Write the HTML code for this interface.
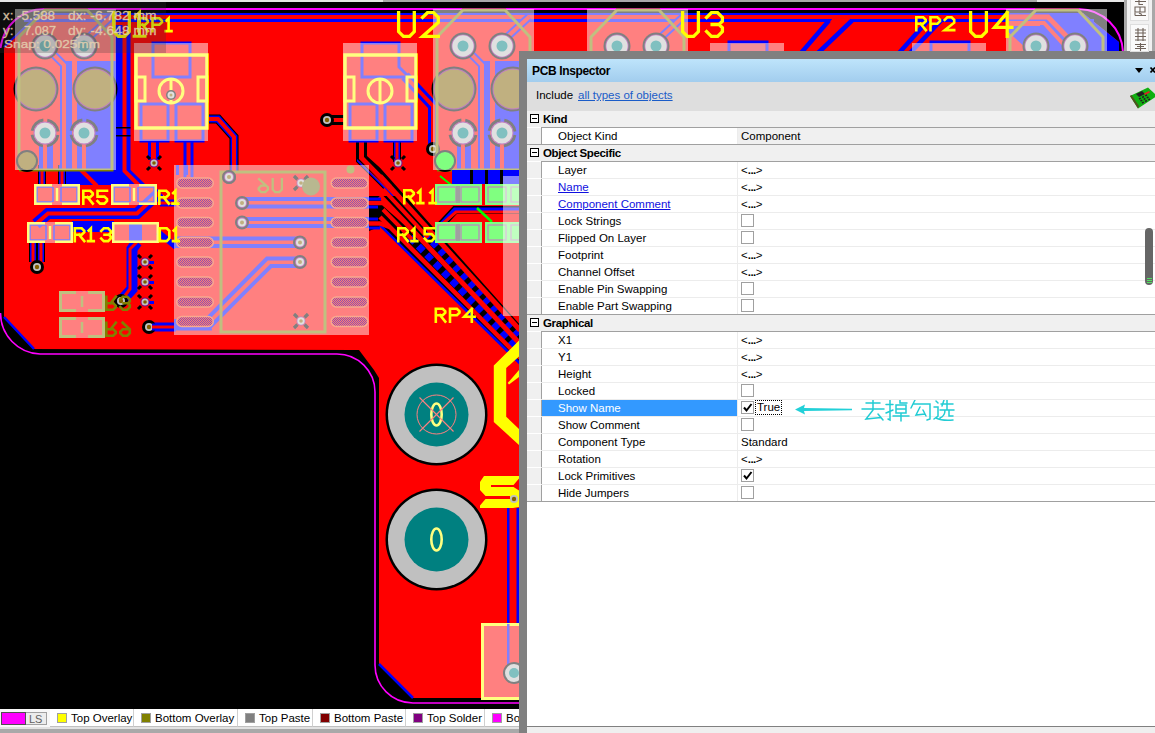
<!DOCTYPE html>
<html><head><meta charset="utf-8">
<style>
*{margin:0;padding:0;box-sizing:border-box}
html,body{width:1155px;height:733px;overflow:hidden;background:#000;font-family:"Liberation Sans",sans-serif}
#pcb{position:absolute;left:0;top:0}
#panel{position:absolute;left:519px;top:51px;width:636px;height:682px;background:#808080}
#pin{position:absolute;left:8px;top:8px;right:0;bottom:0;background:#fff}
#title{position:absolute;left:0;top:0;right:0;height:23px;background:linear-gradient(#bee4fb,#a2cdee);}
#title b{position:absolute;left:5px;top:5px;font-size:12px;letter-spacing:-0.35px;color:#000}
#incl{position:absolute;left:0;top:23px;right:0;height:29px;background:#dedede;font-size:11.5px}
#incl span{position:absolute;left:9px;top:7px}
#incl a{position:absolute;left:51px;top:7px;color:#1a5cc8;text-decoration:underline}
.tbl{position:absolute;left:0;top:0}
.hdr{position:absolute;left:527px;width:628px;height:16px;background:#f0f0f0;font-size:11.5px}
.hdr b{position:absolute;left:16px;top:2px;letter-spacing:-0.35px}
.mi{position:absolute;left:3px;top:3px;width:9px;height:9px;border:1px solid #000;background:#fff}
.mi:after{content:"";position:absolute;left:1px;top:3px;width:5px;height:1px;background:#000}
.row{position:absolute;left:527px;width:628px;height:16px;font-size:11.5px;background:#f0f0f0}
.nm{position:absolute;left:14px;top:0;width:196px;height:16px;background:#fff;border-left:1px solid #a0a0a0}
.nm span{position:absolute;left:16px;top:2px;color:#000;white-space:nowrap}
.nm.lk span{color:#1010e0;text-decoration:underline}
.nm.sel{background:#3399ff}
.nm.sel span{color:#fff}
.vl{position:absolute;left:210px;top:0;right:0;height:16px;background:#fff;border-left:1px solid #ececec;padding-left:3px;padding-top:2px;white-space:nowrap}
.vl.ro{background:#f0f0f0}
.dots{font-weight:700;letter-spacing:-0.5px}
.cb{position:absolute;left:3px;top:1px;width:13px;height:13px;border:1px solid #a0a0a0;background:#fff}
.cb svg{position:absolute;left:0;top:0}
.tru{position:absolute;left:17px;top:0px;border:1px dotted #000;padding:0 1px;line-height:13px}
.ln{position:absolute;height:1px}

#bbar{position:absolute;left:0;top:709px;width:519px;height:19px;background:#f7f7f7;font-size:11.5px;color:#000}
#bbar2{position:absolute;left:0;top:727px;width:519px;height:6px;background:#a9a9a9}
#bbar2:after{content:"";position:absolute;left:0;top:0;width:519px;height:2px;background:#e2e2e2}
.lsw{position:absolute;left:1px;top:3px;width:25px;height:13px;background:#ff00ff;border:1px solid #505050}
.lsb{position:absolute;left:26px;top:3px;width:21px;height:13px;background:#ececec;border:1px solid #a0a0a0;border-left:none;color:#606060;font-size:11px;line-height:12px;padding-left:3px}
.tab{position:absolute;top:0;height:18px;background:#fff;border-right:1px solid #d0d0d0;border-bottom:1px solid #c0c0c0}
.tab i{position:absolute;left:7px;top:4px;width:10px;height:10px;border:1px solid #a0a0a0}
.tab span{position:absolute;left:21px;top:3px;white-space:nowrap}
#side{position:absolute;left:1124px;top:0;width:31px;height:51px;background:#d4d4d4}
.stab{position:absolute;left:6px;width:19px;background:#f8f8f8;border:1px solid #dcdcdc}
.ptools{position:absolute;font-size:11px;color:#000}
</style></head><body>
<svg id="pcb" width="1155" height="733" viewBox="0 0 1155 733" font-family="Liberation Sans, sans-serif">
<defs>
<pattern id="chk" width="2" height="2" patternUnits="userSpaceOnUse"><rect width="2" height="2" fill="#ff8070"/><rect width="1" height="1" fill="#9050b0"/><rect x="1" y="1" width="1" height="1" fill="#9050b0"/></pattern>
<pattern id="chk2" width="4" height="4" patternUnits="userSpaceOnUse"><rect width="4" height="4" fill="#ff0000"/><rect width="2" height="2" fill="#400080"/><rect x="2" y="2" width="2" height="2" fill="#400080"/></pattern>
</defs>
<rect x="0" y="0" width="1155" height="2" fill="#e6e6e6"/>
<rect x="383" y="0" width="654" height="2" fill="#a8a8a8"/>
<path d="M0.5,48 A44,44 0 0 1 44,9 L1079,9 A45,45 0 0 1 1123,52" fill="none" stroke="#ff00ff" stroke-width="2"/>
<path d="M0.5,313 A41,41 0 0 0 40,354 L337,354 A38,38 0 0 1 375,392 L375,665 A38,38 0 0 0 413,703 L519,703" fill="none" stroke="#ff00ff" stroke-width="1.6"/>
<path d="M4,47 L40,13 L1083,13 L1119,42 L1119,60 L519,60 L519,698 L413,698 L379,664 L379,378 L374,370 L359,350 L34,349 L4,317 Z" fill="#ff0000"/>
<line x1="4" y1="317" x2="34" y2="349" stroke="#0000ff" stroke-width="2.5" stroke-linecap="butt"/>
<line x1="4" y1="47" x2="40" y2="13" stroke="#0000ff" stroke-width="2" stroke-linecap="butt"/>
<line x1="379" y1="664" x2="413" y2="698" stroke="#0000ff" stroke-width="2.5" stroke-linecap="butt"/>
<rect x="40" y="13" width="1040" height="2" fill="#0000ff" />
<rect x="24" y="19" width="1070" height="3" fill="#0000ff" />
<rect x="115.5" y="25" width="15" height="146" fill="#0000ff" />
<path d="M58,170 L130.5,170 L146,185 L58,185 Z" fill="#0000ff"/>
<polyline points="124.5,25 124.5,171 139,185.5" fill="none" stroke="#ff0000" stroke-width="4" stroke-linecap="butt" stroke-linejoin="miter"/>
<polyline points="81,170 97,186" fill="none" stroke="#ff0000" stroke-width="4" stroke-linecap="butt" stroke-linejoin="miter"/>
<rect x="96" y="127" width="34.5" height="1.5" fill="#000000" />
<rect x="96" y="135" width="34.5" height="1.5" fill="#000000" />
<polyline points="42,165 42,185" fill="none" stroke="#000000" stroke-width="8.0" stroke-linecap="butt" stroke-linejoin="miter"/>
<polyline points="42,165 42,185" fill="none" stroke="#0000ff" stroke-width="6.0" stroke-linecap="butt" stroke-linejoin="miter"/>
<polyline points="42,165 42,185" fill="none" stroke="#ff0000" stroke-width="3" stroke-linecap="butt" stroke-linejoin="miter"/>
<polyline points="62,165 62,185" fill="none" stroke="#000000" stroke-width="8.0" stroke-linecap="butt" stroke-linejoin="miter"/>
<polyline points="62,165 62,185" fill="none" stroke="#0000ff" stroke-width="6.0" stroke-linecap="butt" stroke-linejoin="miter"/>
<polyline points="62,165 62,185" fill="none" stroke="#ff0000" stroke-width="3" stroke-linecap="butt" stroke-linejoin="miter"/>
<polyline points="36,224 48,213.5 137,213.5 160,192" fill="none" stroke="#0000ff" stroke-width="11" stroke-linecap="butt" stroke-linejoin="miter"/>
<polyline points="36,224 48,213.5 137,213.5 160,192" fill="none" stroke="#ff0000" stroke-width="4" stroke-linecap="butt" stroke-linejoin="miter"/>
<rect x="72" y="221" width="42" height="11" fill="#0000ff" />
<polyline points="33,242 33,262" fill="none" stroke="#000000" stroke-width="8.0" stroke-linecap="butt" stroke-linejoin="miter"/>
<polyline points="33,242 33,262" fill="none" stroke="#0000ff" stroke-width="6.0" stroke-linecap="butt" stroke-linejoin="miter"/>
<polyline points="33,242 33,262" fill="none" stroke="#ff0000" stroke-width="3" stroke-linecap="butt" stroke-linejoin="miter"/>
<polyline points="41,242 41,262" fill="none" stroke="#000000" stroke-width="8.0" stroke-linecap="butt" stroke-linejoin="miter"/>
<polyline points="41,242 41,262" fill="none" stroke="#0000ff" stroke-width="6.0" stroke-linecap="butt" stroke-linejoin="miter"/>
<polyline points="41,242 41,262" fill="none" stroke="#ff0000" stroke-width="3" stroke-linecap="butt" stroke-linejoin="miter"/>
<polyline points="153.5,141 153.5,160" fill="none" stroke="#0000ff" stroke-width="11" stroke-linecap="butt" stroke-linejoin="miter"/>
<polyline points="153.5,141 153.5,160" fill="none" stroke="#ff0000" stroke-width="5" stroke-linecap="butt" stroke-linejoin="miter"/>
<polyline points="188.5,141 188.5,178" fill="none" stroke="#0000ff" stroke-width="10" stroke-linecap="butt" stroke-linejoin="miter"/>
<polyline points="188.5,141 188.5,178" fill="none" stroke="#ff0000" stroke-width="4" stroke-linecap="butt" stroke-linejoin="miter"/>
<polyline points="209,119 218,119 234,137 234,172" fill="none" stroke="#000000" stroke-width="9.0" stroke-linecap="butt" stroke-linejoin="miter"/>
<polyline points="209,119 218,119 234,137 234,172" fill="none" stroke="#0000ff" stroke-width="7.0" stroke-linecap="butt" stroke-linejoin="miter"/>
<polyline points="209,119 218,119 234,137 234,172" fill="none" stroke="#ff0000" stroke-width="4" stroke-linecap="butt" stroke-linejoin="miter"/>
<polyline points="327,120 345,120" fill="none" stroke="#000000" stroke-width="10" stroke-linecap="butt" stroke-linejoin="miter"/>
<polyline points="327,120 345,120" fill="none" stroke="#ff0000" stroke-width="4" stroke-linecap="butt" stroke-linejoin="miter"/>
<polyline points="360,141 360,160 375,175 400,200" fill="none" stroke="#000000" stroke-width="8.0" stroke-linecap="butt" stroke-linejoin="miter"/>
<polyline points="360,141 360,160 375,175 400,200" fill="none" stroke="#0000ff" stroke-width="6.0" stroke-linecap="butt" stroke-linejoin="miter"/>
<polyline points="360,141 360,160 375,175 400,200" fill="none" stroke="#ff0000" stroke-width="3" stroke-linecap="butt" stroke-linejoin="miter"/>
<polyline points="397,141 397,162" fill="none" stroke="#000000" stroke-width="8.0" stroke-linecap="butt" stroke-linejoin="miter"/>
<polyline points="397,141 397,162" fill="none" stroke="#0000ff" stroke-width="6.0" stroke-linecap="butt" stroke-linejoin="miter"/>
<polyline points="397,141 397,162" fill="none" stroke="#ff0000" stroke-width="3" stroke-linecap="butt" stroke-linejoin="miter"/>
<polyline points="405,76 433,106 433,150" fill="none" stroke="#0000ff" stroke-width="10" stroke-linecap="butt" stroke-linejoin="miter"/>
<polyline points="405,76 433,106 433,150" fill="none" stroke="#ff0000" stroke-width="4" stroke-linecap="butt" stroke-linejoin="miter"/>
<polyline points="137,242 132,249 132,289 121,301" fill="none" stroke="#0000ff" stroke-width="11" stroke-linecap="butt" stroke-linejoin="miter"/>
<polyline points="137,242 130,249 130,289 121,301" fill="none" stroke="#ff0000" stroke-width="3" stroke-linecap="butt" stroke-linejoin="miter"/>
<polyline points="158,232 176,247" fill="none" stroke="#0000ff" stroke-width="6" stroke-linecap="butt" stroke-linejoin="miter"/>
<polyline points="149,327 176,327" fill="none" stroke="#0000ff" stroke-width="9" stroke-linecap="butt" stroke-linejoin="miter"/>
<polyline points="149,327 176,327" fill="none" stroke="#ff0000" stroke-width="3" stroke-linecap="butt" stroke-linejoin="miter"/>
<rect x="145" y="261" width="9" height="3" fill="#0000ff" />
<rect x="145" y="281" width="9" height="3" fill="#0000ff" />
<rect x="145" y="301" width="9" height="3" fill="#0000ff" />
<polyline points="160,203 176,203" fill="none" stroke="#0000ff" stroke-width="7" stroke-linecap="butt" stroke-linejoin="miter"/>
<polyline points="160,203 176,203" fill="none" stroke="#ff0000" stroke-width="3" stroke-linecap="butt" stroke-linejoin="miter"/>
<path d="M356,140 L367,140 L367,156 L380,167.7 L520,324.7 L520,364.3 L380,226.4 L369,231 L369,196 L396,196 L357,159 Z" fill="#000000"/>
<line x1="425.0" y1="233.9" x2="520.0" y2="336.6" stroke="#0000ff" stroke-width="7" stroke-dasharray="6 5"/>
<line x1="410.0" y1="237.4" x2="520.0" y2="350.8" stroke="#0000ff" stroke-width="7" stroke-dasharray="7 5"/>
<line x1="380.0" y1="225.2" x2="520.0" y2="363.5" stroke="#0000ff" stroke-width="2.5"/>
<line x1="380.0" y1="175.9" x2="520.0" y2="330.2" stroke="#ff0000" stroke-width="5"/>
<line x1="383.0" y1="189.1" x2="428.0" y2="237.7" stroke="#ff0000" stroke-width="4"/>
<line x1="383.0" y1="209.5" x2="412.0" y2="239.4" stroke="#ff0000" stroke-width="4"/>
<line x1="380.0" y1="195.9" x2="520.0" y2="343.7" stroke="#ff0000" stroke-width="5"/>
<line x1="380.0" y1="217.0" x2="520.0" y2="358.0" stroke="#ff0000" stroke-width="4.5"/>
<polyline points="361.5,140 361.5,158 390,186.9412857142857" fill="none" stroke="#ff0000" stroke-width="5" stroke-linecap="butt" stroke-linejoin="miter"/>
<polyline points="369,203 383,203 405,222.27457142857142" fill="none" stroke="#ff0000" stroke-width="4.5" stroke-linecap="butt" stroke-linejoin="miter"/>
<polyline points="369,199 381,199" fill="none" stroke="#0000ff" stroke-width="3" stroke-linecap="butt" stroke-linejoin="miter"/>
<polyline points="369,207 378,207" fill="none" stroke="#0000ff" stroke-width="3" stroke-linecap="butt" stroke-linejoin="miter"/>
<polyline points="369,223.5 380,223.5 390,227.07628571428572" fill="none" stroke="#ff0000" stroke-width="4.5" stroke-linecap="butt" stroke-linejoin="miter"/>
<polyline points="369,219 378,219" fill="none" stroke="#0000ff" stroke-width="3" stroke-linecap="butt" stroke-linejoin="miter"/>
<polyline points="369,228 380,228" fill="none" stroke="#0000ff" stroke-width="3" stroke-linecap="butt" stroke-linejoin="miter"/>
<g transform="translate(154,163)"><path d="M-7,-7 L-4,-4 M7,7 L4,4 M-7,7 L-4,4 M7,-7 L4,-4" stroke="#000000" stroke-width="3"/></g>
<circle cx="154" cy="163" r="4.5" fill="#800080" />
<circle cx="154" cy="163" r="3.5" fill="#c0c0c0" />
<circle cx="154" cy="163" r="1.8" fill="#806000" />
<g transform="translate(398,163)"><path d="M-7,-7 L-4,-4 M7,7 L4,4 M-7,7 L-4,4 M7,-7 L4,-4" stroke="#000000" stroke-width="3"/></g>
<circle cx="398" cy="163" r="4.5" fill="#800080" />
<circle cx="398" cy="163" r="3.5" fill="#c0c0c0" />
<circle cx="398" cy="163" r="1.8" fill="#806000" />
<circle cx="327" cy="120" r="7" fill="#000000" />
<circle cx="327" cy="120" r="4" fill="#c0c0c0" />
<circle cx="327" cy="120" r="2.2" fill="#806000" />
<circle cx="37" cy="267" r="7" fill="#000000" />
<circle cx="37" cy="267" r="4" fill="#c0c0c0" />
<circle cx="37" cy="267" r="2.2" fill="#806000" />
<circle cx="433" cy="149" r="7" fill="#000000" />
<circle cx="433" cy="149" r="4" fill="#c0c0c0" />
<circle cx="433" cy="149" r="2.2" fill="#806000" />
<g transform="translate(145,262)"><path d="M-7,-7 L-4,-4 M7,7 L4,4 M-7,7 L-4,4 M7,-7 L4,-4" stroke="#000000" stroke-width="3"/></g>
<circle cx="145" cy="262" r="4.5" fill="#800080" />
<circle cx="145" cy="262" r="3.5" fill="#c0c0c0" />
<circle cx="145" cy="262" r="1.8" fill="#806000" />
<g transform="translate(145,282)"><path d="M-7,-7 L-4,-4 M7,7 L4,4 M-7,7 L-4,4 M7,-7 L4,-4" stroke="#000000" stroke-width="3"/></g>
<circle cx="145" cy="282" r="4.5" fill="#800080" />
<circle cx="145" cy="282" r="3.5" fill="#c0c0c0" />
<circle cx="145" cy="282" r="1.8" fill="#806000" />
<g transform="translate(145,302)"><path d="M-7,-7 L-4,-4 M7,7 L4,4 M-7,7 L-4,4 M7,-7 L4,-4" stroke="#000000" stroke-width="3"/></g>
<circle cx="145" cy="302" r="4.5" fill="#800080" />
<circle cx="145" cy="302" r="3.5" fill="#c0c0c0" />
<circle cx="145" cy="302" r="1.8" fill="#806000" />
<circle cx="149" cy="327" r="7" fill="#000000" />
<circle cx="149" cy="327" r="4" fill="#c0c0c0" />
<circle cx="149" cy="327" r="2.2" fill="#806000" />
<circle cx="121" cy="301" r="7" fill="#000000" />
<circle cx="121" cy="301" r="4" fill="#c0c0c0" />
<circle cx="121" cy="301" r="2.2" fill="#806000" />
<circle cx="229" cy="177" r="7" fill="#000000" />
<circle cx="229" cy="177" r="4" fill="#c0c0c0" />
<circle cx="229" cy="177" r="2.2" fill="#806000" />
<path d="M1040,13 L1083,13 L1119,42 L1119,52 L1030,52 L1006,30 L1006,26 L1040,26 Z" fill="#0000ff"/>
<polyline points="1006,17 1048,17 1075,45" fill="none" stroke="#ff0000" stroke-width="5" stroke-linecap="butt" stroke-linejoin="miter"/>
<polyline points="1006,23 1044,23 1066,47" fill="none" stroke="#ff0000" stroke-width="4" stroke-linecap="butt" stroke-linejoin="miter"/>
<path d="M1006,30 L1030,52 L1006,52 Z" fill="#ff0000"/>
<path d="M61,61 L116,61 L116,170 L61,170 Z" fill="#0000ff"/>
<rect x="72" y="59" width="5" height="111" fill="#ff0000" />
<rect x="39" y="129" width="14" height="41" fill="#0000ff" />
<rect x="43" y="129" width="4" height="41" fill="#ff0000" />
<rect x="78" y="129" width="14" height="41" fill="#0000ff" />
<rect x="82" y="129" width="4" height="41" fill="#ff0000" />
<polyline points="47,48 64,65 64,170" fill="none" stroke="#0000ff" stroke-width="8" stroke-linecap="butt" stroke-linejoin="miter"/>
<polyline points="47,48 64,65 64,170" fill="none" stroke="#ff0000" stroke-width="4" stroke-linecap="butt" stroke-linejoin="miter"/>
<circle cx="36" cy="89" r="22.5" fill="#000000" />
<circle cx="36" cy="89" r="20.5" fill="#800080" />
<circle cx="36" cy="89" r="19.5" fill="#806000" />
<circle cx="95" cy="89" r="22.5" fill="#000000" />
<circle cx="95" cy="89" r="20.5" fill="#800080" />
<circle cx="95" cy="89" r="19.5" fill="#806000" />
<circle cx="45" cy="133" r="13" fill="none" stroke="#000000" stroke-width="3" stroke-dasharray="16.4 4" stroke-dashoffset="-2"/>
<circle cx="45" cy="133" r="11.5" fill="#800080" />
<circle cx="45" cy="133" r="10.5" fill="#c0c0c0" />
<circle cx="45" cy="133" r="5.5" fill="#008080" />
<circle cx="84" cy="133" r="13" fill="none" stroke="#000000" stroke-width="3" stroke-dasharray="16.4 4" stroke-dashoffset="-2"/>
<circle cx="84" cy="133" r="11.5" fill="#800080" />
<circle cx="84" cy="133" r="10.5" fill="#c0c0c0" />
<circle cx="84" cy="133" r="5.5" fill="#008080" />
<polyline points="87,39 111,17" fill="none" stroke="#0000ff" stroke-width="8" stroke-linecap="butt" stroke-linejoin="miter"/>
<polyline points="87,39 111,17" fill="none" stroke="#ff0000" stroke-width="4" stroke-linecap="butt" stroke-linejoin="miter"/>
<circle cx="45" cy="46" r="13.5" fill="#000000" />
<circle cx="45" cy="46" r="11.5" fill="#800080" />
<circle cx="45" cy="46" r="10.7" fill="#c0c0c0" />
<circle cx="45" cy="46" r="5.5" fill="#008080" />
<circle cx="84" cy="46" r="13.5" fill="#000000" />
<circle cx="84" cy="46" r="11.5" fill="#800080" />
<circle cx="84" cy="46" r="10.7" fill="#c0c0c0" />
<circle cx="84" cy="46" r="5.5" fill="#008080" />
<polyline points="19,170 19,37 45,10 87,10 112,37 112,170 19,170" fill="none" stroke="#808000" stroke-width="3" stroke-linecap="butt" stroke-linejoin="miter"/>
<circle cx="27" cy="161" r="11" fill="#000000" />
<circle cx="27" cy="161" r="9" fill="#806000" />
<rect x="15" y="9" width="101" height="161" fill="rgba(255,255,255,0.5)" />
<path d="M479,61 L534,61 L534,170 L479,170 Z" fill="#0000ff"/>
<rect x="490" y="59" width="5" height="111" fill="#ff0000" />
<rect x="457" y="129" width="14" height="41" fill="#0000ff" />
<rect x="461" y="129" width="4" height="41" fill="#ff0000" />
<rect x="496" y="129" width="14" height="41" fill="#0000ff" />
<rect x="500" y="129" width="4" height="41" fill="#ff0000" />
<polyline points="465,48 482,65 482,170" fill="none" stroke="#0000ff" stroke-width="8" stroke-linecap="butt" stroke-linejoin="miter"/>
<polyline points="465,48 482,65 482,170" fill="none" stroke="#ff0000" stroke-width="4" stroke-linecap="butt" stroke-linejoin="miter"/>
<circle cx="454" cy="89" r="22.5" fill="#000000" />
<circle cx="454" cy="89" r="20.5" fill="#800080" />
<circle cx="454" cy="89" r="19.5" fill="#806000" />
<circle cx="513" cy="89" r="22.5" fill="#000000" />
<circle cx="513" cy="89" r="20.5" fill="#800080" />
<circle cx="513" cy="89" r="19.5" fill="#806000" />
<circle cx="463" cy="133" r="13" fill="none" stroke="#000000" stroke-width="3" stroke-dasharray="16.4 4" stroke-dashoffset="-2"/>
<circle cx="463" cy="133" r="11.5" fill="#800080" />
<circle cx="463" cy="133" r="10.5" fill="#c0c0c0" />
<circle cx="463" cy="133" r="5.5" fill="#008080" />
<circle cx="502" cy="133" r="13" fill="none" stroke="#000000" stroke-width="3" stroke-dasharray="16.4 4" stroke-dashoffset="-2"/>
<circle cx="502" cy="133" r="11.5" fill="#800080" />
<circle cx="502" cy="133" r="10.5" fill="#c0c0c0" />
<circle cx="502" cy="133" r="5.5" fill="#008080" />
<polyline points="505,39 529,17" fill="none" stroke="#0000ff" stroke-width="8" stroke-linecap="butt" stroke-linejoin="miter"/>
<polyline points="505,39 529,17" fill="none" stroke="#ff0000" stroke-width="4" stroke-linecap="butt" stroke-linejoin="miter"/>
<circle cx="463" cy="46" r="13.5" fill="#000000" />
<circle cx="463" cy="46" r="11.5" fill="#800080" />
<circle cx="463" cy="46" r="10.7" fill="#c0c0c0" />
<circle cx="463" cy="46" r="5.5" fill="#008080" />
<circle cx="502" cy="46" r="13.5" fill="#000000" />
<circle cx="502" cy="46" r="11.5" fill="#800080" />
<circle cx="502" cy="46" r="10.7" fill="#c0c0c0" />
<circle cx="502" cy="46" r="5.5" fill="#008080" />
<polyline points="437,170 437,37 463,10 505,10 530,37 530,170 437,170" fill="none" stroke="#808000" stroke-width="3" stroke-linecap="butt" stroke-linejoin="miter"/>
<circle cx="445" cy="161" r="11" fill="#000000" />
<circle cx="445" cy="161" r="9" fill="#00ff00" />
<rect x="433" y="9" width="101" height="161" fill="rgba(255,255,255,0.5)" />
<polyline points="659,39 683,17" fill="none" stroke="#0000ff" stroke-width="8" stroke-linecap="butt" stroke-linejoin="miter"/>
<polyline points="659,39 683,17" fill="none" stroke="#ff0000" stroke-width="4" stroke-linecap="butt" stroke-linejoin="miter"/>
<circle cx="617" cy="46" r="13.5" fill="#000000" />
<circle cx="617" cy="46" r="11.5" fill="#800080" />
<circle cx="617" cy="46" r="10.7" fill="#c0c0c0" />
<circle cx="617" cy="46" r="5.5" fill="#008080" />
<circle cx="656" cy="46" r="13.5" fill="#000000" />
<circle cx="656" cy="46" r="11.5" fill="#800080" />
<circle cx="656" cy="46" r="10.7" fill="#c0c0c0" />
<circle cx="656" cy="46" r="5.5" fill="#008080" />
<polyline points="591,51 591,37 617,10 659,10 684,37 684,51" fill="none" stroke="#808000" stroke-width="3" stroke-linecap="butt" stroke-linejoin="miter"/>
<rect x="587" y="9" width="101" height="42" fill="rgba(255,255,255,0.5)" />
<circle cx="1036" cy="46" r="13.5" fill="#000000" />
<circle cx="1036" cy="46" r="11.5" fill="#800080" />
<circle cx="1036" cy="46" r="10.7" fill="#c0c0c0" />
<circle cx="1036" cy="46" r="5.5" fill="#008080" />
<circle cx="1075" cy="46" r="13.5" fill="#000000" />
<circle cx="1075" cy="46" r="11.5" fill="#800080" />
<circle cx="1075" cy="46" r="10.7" fill="#c0c0c0" />
<circle cx="1075" cy="46" r="5.5" fill="#008080" />
<polyline points="1010,51 1010,37 1036,10 1078,10 1103,37 1103,51" fill="none" stroke="#808000" stroke-width="3" stroke-linecap="butt" stroke-linejoin="miter"/>
<rect x="1006" y="9" width="101" height="42" fill="rgba(255,255,255,0.5)" />
<rect x="153" y="43" width="37" height="34" fill="none" stroke="#0000ff" stroke-width="3"/>
<rect x="141" y="104" width="27" height="37" fill="none" stroke="#0000ff" stroke-width="3"/>
<rect x="176" y="104" width="27" height="37" fill="none" stroke="#0000ff" stroke-width="3"/>
<rect x="136" y="55" width="71" height="73" fill="none" stroke="#ffff00" stroke-width="3.5"/>
<rect x="136" y="77" width="9" height="24" fill="none" stroke="#ffff00" stroke-width="3"/>
<rect x="198" y="77" width="9" height="24" fill="none" stroke="#ffff00" stroke-width="3"/>
<circle cx="171" cy="91" r="12" fill="none" stroke="#ffff00" stroke-width="3" />
<line x1="171" y1="78" x2="171" y2="104" stroke="#ffff00" stroke-width="3" stroke-linecap="butt"/>
<circle cx="171" cy="95" r="5" fill="#000000" />
<circle cx="171" cy="95" r="3.5" fill="#c0c0c0" />
<circle cx="171" cy="95" r="1.5" fill="#806000" />
<rect x="134" y="43" width="74" height="98" fill="rgba(255,255,255,0.5)" />
<path d="M362,43 L399,43 L399,67 L409,77 L362,77 Z" fill="none" stroke="#0000ff" stroke-width="3"/>
<rect x="350" y="104" width="27" height="37" fill="none" stroke="#0000ff" stroke-width="3"/>
<rect x="385" y="104" width="27" height="37" fill="none" stroke="#0000ff" stroke-width="3"/>
<rect x="345" y="55" width="71" height="73" fill="none" stroke="#ffff00" stroke-width="3.5"/>
<rect x="345" y="77" width="9" height="24" fill="none" stroke="#ffff00" stroke-width="3"/>
<rect x="407" y="77" width="9" height="24" fill="none" stroke="#ffff00" stroke-width="3"/>
<circle cx="380" cy="91" r="12" fill="none" stroke="#ffff00" stroke-width="3" />
<line x1="380" y1="78" x2="380" y2="104" stroke="#ffff00" stroke-width="3" stroke-linecap="butt"/>
<rect x="343" y="43" width="74" height="98" fill="rgba(255,255,255,0.5)" />
<rect x="37" y="187" width="16.0" height="15" fill="none" stroke="#0000ff" stroke-width="1.6"/>
<rect x="61.0" y="187" width="16.0" height="15" fill="none" stroke="#0000ff" stroke-width="1.6"/>
<rect x="35.25" y="185.25" width="43.5" height="18.5" fill="none" stroke="#ffff00" stroke-width="2.5"/>
<rect x="52.0" y="184" width="10" height="3" fill="#ff0000" />
<rect x="52.0" y="202" width="10" height="3" fill="#ff0000" />
<line x1="57.0" y1="188" x2="57.0" y2="201" stroke="#ffff00" stroke-width="2.5" stroke-linecap="butt"/>
<rect x="34" y="184" width="46" height="21" fill="rgba(255,255,255,0.5)" />
<rect x="114" y="187" width="16.0" height="15" fill="none" stroke="#0000ff" stroke-width="1.6"/>
<rect x="138.0" y="187" width="16.0" height="15" fill="none" stroke="#0000ff" stroke-width="1.6"/>
<rect x="112.25" y="185.25" width="43.5" height="18.5" fill="none" stroke="#ffff00" stroke-width="2.5"/>
<rect x="129.0" y="184" width="10" height="3" fill="#ff0000" />
<rect x="129.0" y="202" width="10" height="3" fill="#ff0000" />
<line x1="134.0" y1="188" x2="134.0" y2="201" stroke="#ffff00" stroke-width="2.5" stroke-linecap="butt"/>
<rect x="111" y="184" width="46" height="21" fill="rgba(255,255,255,0.5)" />
<rect x="30" y="225" width="16.0" height="15" fill="none" stroke="#0000ff" stroke-width="1.6"/>
<rect x="54.0" y="225" width="16.0" height="15" fill="none" stroke="#0000ff" stroke-width="1.6"/>
<rect x="28.25" y="223.25" width="43.5" height="18.5" fill="none" stroke="#ffff00" stroke-width="2.5"/>
<rect x="45.0" y="222" width="10" height="3" fill="#ff0000" />
<rect x="45.0" y="240" width="10" height="3" fill="#ff0000" />
<line x1="50.0" y1="226" x2="50.0" y2="239" stroke="#ffff00" stroke-width="2.5" stroke-linecap="butt"/>
<rect x="27" y="222" width="46" height="21" fill="rgba(255,255,255,0.5)" />
<rect x="129" y="223" width="13" height="19" fill="#0000ff" />
<rect x="113.25" y="223.25" width="44.5" height="18.5" fill="none" stroke="#ffff00" stroke-width="2.5"/>
<rect x="112" y="222" width="47" height="21" fill="rgba(255,255,255,0.5)" />
<rect x="60.5" y="292.5" width="43" height="18" fill="none" stroke="#808000" stroke-width="3"/>
<rect x="76" y="291" width="12" height="3" fill="#ff0000" />
<rect x="76" y="309" width="12" height="3" fill="#ff0000" />
<line x1="82" y1="296" x2="82" y2="307" stroke="#808000" stroke-width="2.5" stroke-linecap="butt"/>
<rect x="59" y="291" width="46" height="21" fill="rgba(255,255,255,0.5)" />
<rect x="60.5" y="318.5" width="43" height="18" fill="none" stroke="#808000" stroke-width="3"/>
<rect x="76" y="317" width="12" height="3" fill="#ff0000" />
<rect x="76" y="335" width="12" height="3" fill="#ff0000" />
<line x1="82" y1="322" x2="82" y2="333" stroke="#808000" stroke-width="2.5" stroke-linecap="butt"/>
<rect x="59" y="317" width="46" height="21" fill="rgba(255,255,255,0.5)" />
<polyline points="152,327 212,327" fill="none" stroke="#0000ff" stroke-width="7" stroke-linecap="butt" stroke-linejoin="miter"/>
<polyline points="152,327 212,327" fill="none" stroke="#ff0000" stroke-width="3" stroke-linecap="butt" stroke-linejoin="miter"/>
<polyline points="174,238.5 300,238.5" fill="none" stroke="#0000ff" stroke-width="4" stroke-linecap="butt" stroke-linejoin="miter"/>
<polyline points="174,246 300,246" fill="none" stroke="#0000ff" stroke-width="4" stroke-linecap="butt" stroke-linejoin="miter"/>
<polyline points="242,199 369,199" fill="none" stroke="#0000ff" stroke-width="4" stroke-linecap="butt" stroke-linejoin="miter"/>
<polyline points="242,206.5 369,206.5" fill="none" stroke="#0000ff" stroke-width="4" stroke-linecap="butt" stroke-linejoin="miter"/>
<polyline points="242,219 369,219" fill="none" stroke="#0000ff" stroke-width="4" stroke-linecap="butt" stroke-linejoin="miter"/>
<polyline points="242,226 369,226" fill="none" stroke="#0000ff" stroke-width="4" stroke-linecap="butt" stroke-linejoin="miter"/>
<polyline points="300,258.5 267,258.5 205,321 174,321" fill="none" stroke="#0000ff" stroke-width="4" stroke-linecap="butt" stroke-linejoin="miter"/>
<polyline points="300,266 271,266 210,327 174,327" fill="none" stroke="#0000ff" stroke-width="4" stroke-linecap="butt" stroke-linejoin="miter"/>
<rect x="176" y="165" width="3" height="10" fill="#0000ff" />
<rect x="185" y="165" width="3" height="10" fill="#0000ff" />
<rect x="221" y="172" width="104" height="160" fill="none" stroke="#808000" stroke-width="3"/>
<circle cx="242" cy="203" r="7" fill="#000000" />
<circle cx="242" cy="203" r="5" fill="#800080" />
<circle cx="242" cy="203" r="4" fill="#c0c0c0" />
<circle cx="242" cy="203" r="2" fill="#806000" />
<circle cx="242" cy="222.5" r="7" fill="#000000" />
<circle cx="242" cy="222.5" r="5" fill="#800080" />
<circle cx="242" cy="222.5" r="4" fill="#c0c0c0" />
<circle cx="242" cy="222.5" r="2" fill="#806000" />
<circle cx="300" cy="242.5" r="7" fill="#000000" />
<circle cx="300" cy="242.5" r="5" fill="#800080" />
<circle cx="300" cy="242.5" r="4" fill="#c0c0c0" />
<circle cx="300" cy="242.5" r="2" fill="#806000" />
<circle cx="300" cy="262" r="7" fill="#000000" />
<circle cx="300" cy="262" r="5" fill="#800080" />
<circle cx="300" cy="262" r="4" fill="#c0c0c0" />
<circle cx="300" cy="262" r="2" fill="#806000" />
<circle cx="229" cy="177" r="7" fill="#000000" />
<circle cx="229" cy="177" r="5" fill="#800080" />
<circle cx="229" cy="177" r="4" fill="#c0c0c0" />
<circle cx="229" cy="177" r="2" fill="#806000" />
<g transform="translate(301,321)"><path d="M-7,-7 L-3.5,-3.5 M7,7 L3.5,3.5 M-7,7 L-3.5,3.5 M7,-7 L3.5,-3.5" stroke="#000000" stroke-width="3.2"/></g>
<circle cx="301" cy="321" r="4.5" fill="#800080" />
<circle cx="301" cy="321" r="3.7" fill="#c0c0c0" />
<circle cx="301" cy="321" r="1.8" fill="#806000" />
<g transform="translate(301,183)"><path d="M-7,-7 L-3.5,-3.5 M7,7 L3.5,3.5 M-7,7 L-3.5,3.5 M7,-7 L3.5,-3.5" stroke="#000000" stroke-width="3.2"/></g>
<circle cx="301" cy="183" r="4.5" fill="#800080" />
<circle cx="301" cy="183" r="3.7" fill="#c0c0c0" />
<circle cx="301" cy="183" r="1.8" fill="#806000" />
<circle cx="311" cy="186.5" r="9" fill="#707020" />
<circle cx="350.5" cy="169.5" r="4" fill="#808000" />
<rect x="174" y="165" width="195" height="170" fill="rgba(255,255,255,0.5)" />
<rect x="176" y="177.2" width="38" height="11.6" rx="5.8" fill="#f8a890"/>
<rect x="177.5" y="178.7" width="35" height="8.6" rx="4.3" fill="url(#chk)"/>
<rect x="330.5" y="177.2" width="38" height="11.6" rx="5.8" fill="#f8a890"/>
<rect x="332.0" y="178.7" width="35" height="8.6" rx="4.3" fill="url(#chk)"/>
<rect x="176" y="197.2" width="38" height="11.6" rx="5.8" fill="#f8a890"/>
<rect x="177.5" y="198.7" width="35" height="8.6" rx="4.3" fill="url(#chk)"/>
<rect x="330.5" y="197.2" width="38" height="11.6" rx="5.8" fill="#f8a890"/>
<rect x="332.0" y="198.7" width="35" height="8.6" rx="4.3" fill="url(#chk)"/>
<rect x="176" y="216.7" width="38" height="11.6" rx="5.8" fill="#f8a890"/>
<rect x="177.5" y="218.2" width="35" height="8.6" rx="4.3" fill="url(#chk)"/>
<rect x="330.5" y="216.7" width="38" height="11.6" rx="5.8" fill="#f8a890"/>
<rect x="332.0" y="218.2" width="35" height="8.6" rx="4.3" fill="url(#chk)"/>
<rect x="176" y="236.7" width="38" height="11.6" rx="5.8" fill="#f8a890"/>
<rect x="177.5" y="238.2" width="35" height="8.6" rx="4.3" fill="url(#chk)"/>
<rect x="330.5" y="236.7" width="38" height="11.6" rx="5.8" fill="#f8a890"/>
<rect x="332.0" y="238.2" width="35" height="8.6" rx="4.3" fill="url(#chk)"/>
<rect x="176" y="256.2" width="38" height="11.6" rx="5.8" fill="#f8a890"/>
<rect x="177.5" y="257.7" width="35" height="8.6" rx="4.3" fill="url(#chk)"/>
<rect x="330.5" y="256.2" width="38" height="11.6" rx="5.8" fill="#f8a890"/>
<rect x="332.0" y="257.7" width="35" height="8.6" rx="4.3" fill="url(#chk)"/>
<rect x="176" y="276.2" width="38" height="11.6" rx="5.8" fill="#f8a890"/>
<rect x="177.5" y="277.7" width="35" height="8.6" rx="4.3" fill="url(#chk)"/>
<rect x="330.5" y="276.2" width="38" height="11.6" rx="5.8" fill="#f8a890"/>
<rect x="332.0" y="277.7" width="35" height="8.6" rx="4.3" fill="url(#chk)"/>
<rect x="176" y="296.2" width="38" height="11.6" rx="5.8" fill="#f8a890"/>
<rect x="177.5" y="297.7" width="35" height="8.6" rx="4.3" fill="url(#chk)"/>
<rect x="330.5" y="296.2" width="38" height="11.6" rx="5.8" fill="#f8a890"/>
<rect x="332.0" y="297.7" width="35" height="8.6" rx="4.3" fill="url(#chk)"/>
<rect x="176" y="315.7" width="38" height="11.6" rx="5.8" fill="#f8a890"/>
<rect x="177.5" y="317.2" width="35" height="8.6" rx="4.3" fill="url(#chk)"/>
<rect x="330.5" y="315.7" width="38" height="11.6" rx="5.8" fill="#f8a890"/>
<rect x="332.0" y="317.2" width="35" height="8.6" rx="4.3" fill="url(#chk)"/>
<path d="M452,170 L519,170 L519,184 L452,184 Z" fill="#0000ff"/>
<rect x="470" y="170" width="3" height="14" fill="#000000" />
<rect x="485" y="170" width="3" height="14" fill="#000000" />
<rect x="500" y="170" width="3" height="14" fill="#000000" />
<polyline points="440,226 455,210 519,210" fill="none" stroke="#000000" stroke-width="8" stroke-linecap="butt" stroke-linejoin="miter"/>
<polyline points="440,226 455,210 519,210" fill="none" stroke="#0000ff" stroke-width="5" stroke-linecap="butt" stroke-linejoin="miter"/>
<polyline points="440,226 456,212 519,212" fill="none" stroke="#ff0000" stroke-width="3" stroke-linecap="butt" stroke-linejoin="miter"/>
<line x1="477" y1="208" x2="492" y2="222" stroke="#00ff00" stroke-width="2.5" stroke-linecap="butt"/>
<line x1="440" y1="176" x2="455" y2="188" stroke="#00ff00" stroke-width="2" stroke-linecap="butt"/>
<rect x="435" y="184" width="47" height="21" fill="#80ff80" />
<rect x="485" y="184" width="35" height="21" fill="#80ff80" />
<rect x="438" y="187" width="18" height="15" fill="none" stroke="#c080c0" stroke-width="1.2"/>
<rect x="461" y="187" width="18" height="15" fill="none" stroke="#c080c0" stroke-width="1.2"/>
<rect x="488" y="187" width="18" height="15" fill="none" stroke="#c080c0" stroke-width="1.2"/>
<rect x="511" y="187" width="18" height="15" fill="none" stroke="#c080c0" stroke-width="1.2"/>
<rect x="456" y="186" width="4" height="17" fill="#a0a0a0" />
<rect x="435" y="222" width="47" height="21" fill="#80ff80" />
<rect x="485" y="222" width="35" height="21" fill="#80ff80" />
<rect x="438" y="225" width="18" height="15" fill="none" stroke="#c080c0" stroke-width="1.2"/>
<rect x="461" y="225" width="18" height="15" fill="none" stroke="#c080c0" stroke-width="1.2"/>
<rect x="488" y="225" width="18" height="15" fill="none" stroke="#c080c0" stroke-width="1.2"/>
<rect x="511" y="225" width="18" height="15" fill="none" stroke="#c080c0" stroke-width="1.2"/>
<rect x="456" y="224" width="4" height="17" fill="#a0a0a0" />
<rect x="503" y="176" width="16" height="140" fill="rgba(255,255,255,0.5)" />
<circle cx="436.5" cy="414.5" r="51" fill="#000000" />
<circle cx="436.5" cy="414.5" r="48.5" fill="#c0c0c0" />
<circle cx="436.5" cy="414.5" r="32" fill="#008080" />
<ellipse cx="436.5" cy="414.5" rx="5.2" ry="11" fill="none" stroke="#ffff80" stroke-width="2.6"/>
<circle cx="436.5" cy="539.5" r="51" fill="#000000" />
<circle cx="436.5" cy="539.5" r="48.5" fill="#c0c0c0" />
<circle cx="436.5" cy="539.5" r="32" fill="#008080" />
<ellipse cx="436.5" cy="539.5" rx="5.2" ry="11" fill="none" stroke="#ffff80" stroke-width="2.6"/>
<circle cx="436.5" cy="414.5" r="19.5" fill="none" stroke="#ff8080" stroke-width="1" />
<line x1="419.5" y1="397.5" x2="453.5" y2="431.5" stroke="#ff8080" stroke-width="1.1" stroke-linecap="butt"/>
<line x1="453.5" y1="397.5" x2="419.5" y2="431.5" stroke="#ff8080" stroke-width="1.1" stroke-linecap="butt"/>
<path d="M519,340.6 L493.8,365.4 L493.8,422 L519,445 L519,429 L506.2,416.7 L506.2,368 L519,356.5 Z" fill="#ffff00"/>
<path d="M507.7,383 L519,370 L519,377 L509,384.5 Z" fill="#ffff00"/>
<path d="M484,476 L519,476 L519,478.5 L513.5,485 L491,485 L491,487 L513.5,487 L519,490.5 L519,507 L513,508 L480,508 L480,505.5 L485.5,499 L510,499 L510,496 L485.5,496 L480,490 L480,482 Z" fill="#ffff00"/>
<circle cx="514" cy="499" r="4" fill="#c0c0c0" />
<circle cx="514" cy="499" r="2.2" fill="#806000" />
<rect x="507" y="508" width="2.5" height="115" fill="#0000ff" />
<rect x="516.5" y="508" width="2.5" height="115" fill="#0000ff" />
<rect x="481" y="623" width="38" height="77" fill="rgba(255,255,255,0.5)" />
<path d="M519,624.5 L482.5,624.5 L482.5,698.5 L519,698.5" fill="none" stroke="#ffff80" stroke-width="3"/>
<rect x="507" y="624" width="2.5" height="42" fill="#8080ff" />
<circle cx="514" cy="673" r="11" fill="#808080" />
<circle cx="514" cy="673" r="9" fill="#e0e0e0" />
<circle cx="514" cy="673" r="5" fill="#80c0c0" />
<rect x="829" y="18.5" width="21" height="4" fill="#ff0000" />
<polyline points="690,20.5 829,20.5 801,53" fill="none" stroke="#0000ff" stroke-width="3" stroke-linecap="butt" stroke-linejoin="miter"/>
<polyline points="829,20.5 801,53" fill="none" stroke="#0000ff" stroke-width="4.5" stroke-linecap="butt" stroke-linejoin="miter"/>
<polyline points="852,20.5 818,53" fill="none" stroke="#0000ff" stroke-width="4.5" stroke-linecap="butt" stroke-linejoin="miter"/>
<rect x="928" y="18.5" width="12" height="4" fill="#ff0000" />
<polyline points="928,20.5 899,53" fill="none" stroke="#0000ff" stroke-width="4.5" stroke-linecap="butt" stroke-linejoin="miter"/>
<polyline points="941,20.5 910,53" fill="none" stroke="#0000ff" stroke-width="4.5" stroke-linecap="butt" stroke-linejoin="miter"/>
<rect x="729" y="42" width="38" height="12" fill="none" stroke="#0000ff" stroke-width="3"/>
<rect x="731" y="44" width="34" height="8" fill="#e02030" />
<rect x="710" y="43" width="74" height="9" fill="rgba(255,255,255,0.5)" />
<rect x="931" y="42" width="38" height="12" fill="none" stroke="#0000ff" stroke-width="3"/>
<rect x="912" y="43" width="74" height="9" fill="rgba(255,255,255,0.5)" />
<path d="M113.7,12.7 L113.7,31.6 L118.4,36.4 L124.6,36.4 L129.3,31.6 L129.3,12.7" fill="none" stroke="#ffff00" stroke-width="3.3" stroke-linejoin="miter" stroke-linecap="square"/>
<path d="M135.3,16.8 L139.5,12.5 L139.5,36.2 M134.1,36.2 L145.0,36.2" fill="none" stroke="#ffff00" stroke-width="3.0" stroke-linejoin="miter" stroke-linecap="square"/>
<path d="M138.3,31.1 L138.3,18.3 L145.2,18.3 L147.8,20.9 L147.8,22.1 L145.2,24.7 L138.3,24.7 M142.6,24.7 L147.8,31.1 M152.5,31.1 L152.5,18.3 L159.4,18.3 L162.0,20.9 L162.0,22.1 L159.4,24.7 L152.5,24.7 M166.3,20.6 L168.6,18.3 L168.6,31.1 M165.7,31.1 L171.5,31.1" fill="none" stroke="#ffff00" stroke-width="2.6" stroke-linejoin="miter" stroke-linecap="square"/>
<path d="M398.6,12.7 L398.6,31.6 L403.4,36.4 L409.6,36.4 L414.3,31.6 L414.3,12.7 M422.6,17.4 L427.4,12.7 L433.6,12.7 L438.3,17.4 L438.3,22.6 L422.6,36.4 L438.3,36.4" fill="none" stroke="#ffff00" stroke-width="3.3" stroke-linejoin="miter" stroke-linecap="square"/>
<path d="M682.6,12.7 L682.6,31.6 L687.4,36.4 L693.6,36.4 L698.4,31.6 L698.4,12.7 M706.6,17.4 L711.4,12.7 L717.6,12.7 L722.4,17.4 L722.4,21.2 L719.0,24.5 L712.1,24.5 M719.0,24.5 L722.4,27.8 L722.4,31.6 L717.6,36.4 L711.4,36.4 L706.6,31.6" fill="none" stroke="#ffff00" stroke-width="3.3" stroke-linejoin="miter" stroke-linecap="square"/>
<path d="M916.3,30.1 L916.3,17.3 L923.2,17.3 L925.8,19.9 L925.8,21.1 L923.2,23.7 L916.3,23.7 M920.6,23.7 L925.8,30.1 M930.5,30.1 L930.5,17.3 L937.4,17.3 L940.0,19.9 L940.0,21.1 L937.4,23.7 L930.5,23.7 M944.7,19.9 L947.3,17.3 L951.6,17.3 L954.2,19.9 L954.2,22.7 L944.7,30.1 L954.2,30.1" fill="none" stroke="#ffff00" stroke-width="2.6" stroke-linejoin="miter" stroke-linecap="square"/>
<path d="M970.6,12.7 L970.6,31.6 L975.4,36.4 L981.6,36.4 L986.4,31.6 L986.4,12.7 M1007.2,12.7 L994.6,27.3 L1011.9,27.3 M1007.2,12.7 L1007.2,36.4" fill="none" stroke="#ffff00" stroke-width="3.3" stroke-linejoin="miter" stroke-linecap="square"/>
<path d="M83.3,203.6 L83.3,190.8 L90.2,190.8 L92.8,193.4 L92.8,194.6 L90.2,197.2 L83.3,197.2 M87.6,197.2 L92.8,203.6 M107.0,190.8 L97.5,190.8 L97.5,196.6 L104.4,196.6 L107.0,199.1 L107.0,201.0 L104.4,203.6 L100.1,203.6 L97.5,201.0" fill="none" stroke="#ffff00" stroke-width="2.6" stroke-linejoin="miter" stroke-linecap="square"/>
<path d="M159.3,203.6 L159.3,190.8 L166.2,190.8 L168.8,193.4 L168.8,194.6 L166.2,197.2 L159.3,197.2 M163.6,197.2 L168.8,203.6 M173.1,193.1 L175.4,190.8 L175.4,203.6 M172.5,203.6 L178.3,203.6" fill="none" stroke="#ffff00" stroke-width="2.6" stroke-linejoin="miter" stroke-linecap="square"/>
<path d="M74.8,241.1 L74.8,228.3 L81.7,228.3 L84.3,230.9 L84.3,232.1 L81.7,234.7 L74.8,234.7 M79.1,234.7 L84.3,241.1 M88.6,230.6 L90.9,228.3 L90.9,241.1 M88.0,241.1 L93.8,241.1 M101.2,230.9 L103.8,228.3 L108.2,228.3 L110.7,230.9 L110.7,232.9 L108.9,234.7 L104.5,234.7 M108.9,234.7 L110.7,236.5 L110.7,238.5 L108.2,241.1 L103.8,241.1 L101.2,238.5" fill="none" stroke="#ffff00" stroke-width="2.6" stroke-linejoin="miter" stroke-linecap="square"/>
<path d="M159.8,228.3 L159.8,241.1 L166.7,241.1 L169.3,238.5 L169.3,230.9 L166.7,228.3 L159.8,228.3 M173.6,230.6 L175.9,228.3 L175.9,241.1 M173.0,241.1 L178.8,241.1" fill="none" stroke="#ffff00" stroke-width="2.6" stroke-linejoin="miter" stroke-linecap="square"/>
<path d="M404.3,203.1 L404.3,190.3 L411.2,190.3 L413.8,192.9 L413.8,194.1 L411.2,196.7 L404.3,196.7 M408.6,196.7 L413.8,203.1 M418.1,192.6 L420.4,190.3 L420.4,203.1 M417.5,203.1 L423.3,203.1 M430.3,192.6 L432.6,190.3 L432.6,203.1 M429.7,203.1 L435.6,203.1" fill="none" stroke="#ffff00" stroke-width="2.6" stroke-linejoin="miter" stroke-linecap="square"/>
<path d="M398.3,241.1 L398.3,228.3 L405.2,228.3 L407.8,230.9 L407.8,232.1 L405.2,234.7 L398.3,234.7 M402.6,234.7 L407.8,241.1 M412.1,230.6 L414.4,228.3 L414.4,241.1 M411.5,241.1 L417.3,241.1 M434.2,228.3 L424.7,228.3 L424.7,234.1 L431.7,234.1 L434.2,236.6 L434.2,238.5 L431.7,241.1 L427.3,241.1 L424.7,238.5" fill="none" stroke="#ffff00" stroke-width="2.6" stroke-linejoin="miter" stroke-linecap="square"/>
<path d="M435.8,321.6 L435.8,308.8 L442.7,308.8 L445.3,311.4 L445.3,312.6 L442.7,315.2 L435.8,315.2 M440.1,315.2 L445.3,321.6 M450.0,321.6 L450.0,308.8 L456.9,308.8 L459.5,311.4 L459.5,312.6 L456.9,315.2 L450.0,315.2 M471.8,308.8 L464.2,316.7 L474.6,316.7 M471.8,308.8 L471.8,321.6" fill="none" stroke="#ffff00" stroke-width="2.6" stroke-linejoin="miter" stroke-linecap="square"/>
<path d="M-281.9,179.2 L-281.9,189.6 L-279.2,192.2 L-275.2,192.2 L-272.7,189.6 L-272.7,179.2 M-259.1,179.2 L-267.9,187.2 L-267.9,189.6 L-265.2,192.2 L-261.2,192.2 L-258.7,189.6 L-258.7,188.2 L-261.2,185.7 L-265.8,185.7" fill="none" stroke="#c0c080" stroke-width="2.3" stroke-linejoin="miter" stroke-linecap="square" transform="scale(-1,1)"/>
<path d="M106.3,-296.7 L106.3,-309.7 L113.2,-309.7 L115.8,-307.1 L115.8,-305.8 L113.2,-303.2 L106.3,-303.2 M110.6,-303.2 L115.8,-296.7 M120.3,-307.1 L122.9,-309.7 L127.2,-309.7 L129.8,-307.1 L129.8,-305.0 L128.0,-303.2 L123.6,-303.2 M128.0,-303.2 L129.8,-301.4 L129.8,-299.3 L127.2,-296.7 L122.9,-296.7 L120.3,-299.3" fill="none" stroke="#808000" stroke-width="2.6" stroke-linejoin="miter" stroke-linecap="square" transform="scale(1,-1)"/>
<path d="M106.3,-322.7 L106.3,-335.7 L113.2,-335.7 L115.8,-333.1 L115.8,-331.8 L113.2,-329.2 L106.3,-329.2 M110.6,-329.2 L115.8,-322.7 M122.7,-322.7 L129.8,-329.2 L129.8,-333.1 L127.2,-335.7 L122.9,-335.7 L120.3,-333.1 L120.3,-331.8 L122.9,-329.2 L128.5,-329.2" fill="none" stroke="#808000" stroke-width="2.6" stroke-linejoin="miter" stroke-linecap="square" transform="scale(1,-1)"/>
<rect x="0" y="2" width="166" height="51" fill="rgba(50,50,50,0.25)" />
<text x="3" y="20" font-size="13.5" font-family="Liberation Sans, sans-serif" fill="#e4d0b0" fill-opacity="0.85" stroke="#e4d0b0" stroke-opacity="0.6" stroke-width="0.5" textLength="52" lengthAdjust="spacingAndGlyphs">x: -5.588</text>
<text x="68" y="20" font-size="13.5" font-family="Liberation Sans, sans-serif" fill="#e4d0b0" fill-opacity="0.85" stroke="#e4d0b0" stroke-opacity="0.6" stroke-width="0.5" textLength="88.5" lengthAdjust="spacingAndGlyphs">dx: -6.782 mm</text>
<text x="3" y="35" font-size="13.5" font-family="Liberation Sans, sans-serif" fill="#e4d0b0" fill-opacity="0.85" stroke="#e4d0b0" stroke-opacity="0.6" stroke-width="0.5">y:</text>
<text x="24" y="35" font-size="13.5" font-family="Liberation Sans, sans-serif" fill="#e4d0b0" fill-opacity="0.85" stroke="#e4d0b0" stroke-opacity="0.6" stroke-width="0.5" textLength="32" lengthAdjust="spacingAndGlyphs">7.087</text>
<text x="68" y="35" font-size="13.5" font-family="Liberation Sans, sans-serif" fill="#e4d0b0" fill-opacity="0.85" stroke="#e4d0b0" stroke-opacity="0.6" stroke-width="0.5" textLength="88.5" lengthAdjust="spacingAndGlyphs">dy: -4.648 mm</text>
<text x="4" y="48" font-size="11.5" font-family="Liberation Sans, sans-serif" fill="#e4d0b0" fill-opacity="0.85" stroke="#e4d0b0" stroke-opacity="0.6" stroke-width="0.5" textLength="96" lengthAdjust="spacingAndGlyphs">Snap: 0.025mm</text>
</svg>
<div id="bbar">
 <div class="lsw"></div><div class="lsb">LS</div>
 <div class="tab" style="left:50px;width:84px"><i style="background:#ffff00"></i><span>Top Overlay</span></div>
 <div class="tab" style="left:134px;width:104px"><i style="background:#808000"></i><span>Bottom Overlay</span></div>
 <div class="tab" style="left:238px;width:75px"><i style="background:#808080"></i><span>Top Paste</span></div>
 <div class="tab" style="left:313px;width:93px"><i style="background:#800000"></i><span>Bottom Paste</span></div>
 <div class="tab" style="left:406px;width:79px"><i style="background:#800080"></i><span>Top Solder</span></div>
 <div class="tab" style="left:485px;width:60px"><i style="background:#ff00ff"></i><span>Bottom Solder</span></div>
</div>
<div id="bbar2"></div>
<div id="side" style="display:none">
 <div class="stab" style="top:-1px;height:22px"></div>
 <div class="stab" style="top:24px;height:28px"></div>
</div>

<div id="panel"><div id="pin">
 <div id="title"><b>PCB Inspector</b></div>
 <div id="incl"><span>Include</span><a>all types of objects</a></div>
</div></div>
<div class="tbl">
<div class="hdr" style="top:111px"><span class="mi"></span><b>Kind</b></div>
<div class="row" style="top:128px"><div class="nm"><span>Object Kind</span></div><div class="vl ro">Component</div></div>
<div class="hdr" style="top:145px"><span class="mi"></span><b>Object Specific</b></div>
<div class="row" style="top:162px"><div class="nm"><span>Layer</span></div><div class="vl">&lt;<b class="dots">...</b>&gt;</div></div>
<div class="row" style="top:179px"><div class="nm lk"><span>Name</span></div><div class="vl">&lt;<b class="dots">...</b>&gt;</div></div>
<div class="row" style="top:196px"><div class="nm lk"><span>Component Comment</span></div><div class="vl">&lt;<b class="dots">...</b>&gt;</div></div>
<div class="row" style="top:213px"><div class="nm"><span>Lock Strings</span></div><div class="vl"><span class="cb"></span></div></div>
<div class="row" style="top:230px"><div class="nm"><span>Flipped On Layer</span></div><div class="vl"><span class="cb"></span></div></div>
<div class="row" style="top:247px"><div class="nm"><span>Footprint</span></div><div class="vl">&lt;<b class="dots">...</b>&gt;</div></div>
<div class="row" style="top:264px"><div class="nm"><span>Channel Offset</span></div><div class="vl">&lt;<b class="dots">...</b>&gt;</div></div>
<div class="row" style="top:281px"><div class="nm"><span>Enable Pin Swapping</span></div><div class="vl"><span class="cb"></span></div></div>
<div class="row" style="top:298px"><div class="nm"><span>Enable Part Swapping</span></div><div class="vl"><span class="cb"></span></div></div>
<div class="hdr" style="top:315px"><span class="mi"></span><b>Graphical</b></div>
<div class="row" style="top:332px"><div class="nm"><span>X1</span></div><div class="vl">&lt;<b class="dots">...</b>&gt;</div></div>
<div class="row" style="top:349px"><div class="nm"><span>Y1</span></div><div class="vl">&lt;<b class="dots">...</b>&gt;</div></div>
<div class="row" style="top:366px"><div class="nm"><span>Height</span></div><div class="vl">&lt;<b class="dots">...</b>&gt;</div></div>
<div class="row" style="top:383px"><div class="nm"><span>Locked</span></div><div class="vl"><span class="cb"></span></div></div>
<div class="row" style="top:400px"><div class="nm sel"><span>Show Name</span></div><div class="vl"><span class="cb"><svg width="11" height="11" viewBox="0 0 11 11"><path d="M2 5.5 L4.5 8.5 L9.5 2" stroke="#000" stroke-width="2" fill="none"/></svg></span><span class="tru">True</span></div></div>
<div class="row" style="top:417px"><div class="nm"><span>Show Comment</span></div><div class="vl"><span class="cb"></span></div></div>
<div class="row" style="top:434px"><div class="nm"><span>Component Type</span></div><div class="vl">Standard</div></div>
<div class="row" style="top:451px"><div class="nm"><span>Rotation</span></div><div class="vl">&lt;<b class="dots">...</b>&gt;</div></div>
<div class="row" style="top:468px"><div class="nm"><span>Lock Primitives</span></div><div class="vl"><span class="cb"><svg width="11" height="11" viewBox="0 0 11 11"><path d="M2 5.5 L4.5 8.5 L9.5 2" stroke="#000" stroke-width="2" fill="none"/></svg></span></div></div>
<div class="row" style="top:485px"><div class="nm"><span>Hide Jumpers</span></div><div class="vl"><span class="cb"></span></div></div>
<div class="ln" style="top:127px;left:541px;width:614px;background:#a0a0a0"></div>
<div class="ln" style="top:144px;left:527px;width:628px;background:#a0a0a0"></div>
<div class="ln" style="top:161px;left:541px;width:614px;background:#a0a0a0"></div>
<div class="ln" style="top:178px;left:541px;width:614px;background:#ececec"></div>
<div class="ln" style="top:195px;left:541px;width:614px;background:#ececec"></div>
<div class="ln" style="top:212px;left:541px;width:614px;background:#ececec"></div>
<div class="ln" style="top:229px;left:541px;width:614px;background:#ececec"></div>
<div class="ln" style="top:246px;left:541px;width:614px;background:#ececec"></div>
<div class="ln" style="top:263px;left:541px;width:614px;background:#ececec"></div>
<div class="ln" style="top:280px;left:541px;width:614px;background:#ececec"></div>
<div class="ln" style="top:297px;left:541px;width:614px;background:#ececec"></div>
<div class="ln" style="top:314px;left:527px;width:628px;background:#a0a0a0"></div>
<div class="ln" style="top:331px;left:541px;width:614px;background:#a0a0a0"></div>
<div class="ln" style="top:348px;left:541px;width:614px;background:#ececec"></div>
<div class="ln" style="top:365px;left:541px;width:614px;background:#ececec"></div>
<div class="ln" style="top:382px;left:541px;width:614px;background:#ececec"></div>
<div class="ln" style="top:399px;left:541px;width:614px;background:#ececec"></div>
<div class="ln" style="top:416px;left:541px;width:614px;background:#ececec"></div>
<div class="ln" style="top:433px;left:541px;width:614px;background:#ececec"></div>
<div class="ln" style="top:450px;left:541px;width:614px;background:#ececec"></div>
<div class="ln" style="top:467px;left:541px;width:614px;background:#ececec"></div>
<div class="ln" style="top:484px;left:541px;width:614px;background:#ececec"></div>
<div class="ln" style="top:501px;left:527px;width:628px;background:#a0a0a0"></div>
</div>

<div style="position:absolute;left:1135px;top:68px;width:0;height:0;border-left:4px solid transparent;border-right:4px solid transparent;border-top:5px solid #000"></div>
<svg style="position:absolute;left:1149px;top:66px" width="6" height="8"><path d="M1.5,1.5 L6,6.5 M1.5,6.5 L6,1.5" stroke="#000" stroke-width="1.8"/></svg>
<svg style="position:absolute;left:1128px;top:86px" width="27" height="24" viewBox="0 0 27 24">
 <path d="M2,10 L20,1.5 L29,10 L10,22.5 Z" fill="#10b010"/>
 <path d="M2,10 L10,22.5 L11,20 L3.5,9 Z" fill="#505020"/>
 <path d="M8,8 L14,5 L17,8 L11,11 Z" fill="#202020"/>
 <path d="M16,7.5 L21,5 L22,6.5 L17,9 Z" fill="#e02020"/>
 <path d="M11,13 L19,9 M12.5,15 L20.5,11 M14,17 L22,13" stroke="#202020" stroke-width="1.6" stroke-dasharray="2 1.5"/>
</svg>
<div style="position:absolute;left:1145px;top:228px;width:8px;height:57px;border-radius:4px;background:#666"></div>
<div style="position:absolute;left:1147px;top:278px;width:5px;height:1px;background:#50e060;box-shadow:0 2px 0 #50e060,0 4px 0 #50e060"></div>
<svg style="position:absolute;left:794px;top:400px" width="162" height="24" viewBox="794 400 162 24">
 <path d="M795,409.5 L805,404.5 L804,408 L852,408.7 L852,410.3 L804,411 L805,414.5 Z" fill="#22d0d8"/>
 <g fill="none" stroke="#22ccd4" stroke-width="1.5" stroke-linecap="round">
  <!-- 去 -->
  <path d="M866,403 L880,403 M873,399.5 L873,409 M862,409 L884,409 M873,410 L866,419 L881,417.5 M878,414 L883,420"/>
  <!-- 掉 -->
  <path d="M886,404.5 L893,404.5 M890,399.5 L890,420 L888,419 M886,413 L893,410 M900,399.5 L900,403 L907,403 M896,405 L896,413 L906,413 L906,405 Z M896,409 L906,409 M893,416 L909,416 M901,413 L901,421"/>
  <!-- 勾 -->
  <path d="M915,400 L911,408 M914,404 L930,404 L930,419 L927,420 M920,407 L916,415 L925,414 M923,410 L926,416"/>
  <!-- 选 -->
  <path d="M936,401 L938,403 M934,407 L938,407 L938,416 L934,419 M936,418 Q942,421 953,420 M944,400 L942,406 M941,404 L953,404 M947,400 L947,410 M940,410 L954,410 M945,410 Q945,416 940,418 M949,410 L949,416 L953,416"/>
 </g>
</svg>
<div style="position:absolute;left:1124px;top:0;width:31px;height:51px;background:#f0f0f0">
 <div style="position:absolute;left:0;top:0;width:3px;height:51px;background:#a8a8a8"></div>
 <div style="position:absolute;right:0;top:0;width:3px;height:51px;background:#a8a8a8"></div>
 <div style="position:absolute;left:6px;top:-1px;width:19px;height:22px;background:#fafafa;border:1px solid #dedede"></div>
 <div style="position:absolute;left:6px;top:24px;width:19px;height:28px;background:#fafafa;border:1px solid #dedede"></div>
 <svg style="position:absolute;left:6px;top:0" width="19" height="51"><g fill="none" stroke="#6e625a" stroke-width="1.1">
  <path d="M5,1.5 L16,1.5 M9,0 L9,4.5 L13,4.5"/>
  <path d="M5,7 L15,7 L15,12 L5,12 Z M10,7 L10,12"/>
  <path d="M5,15.5 L16,15.5 M5,12.5 L5,15.5 M9,13 L12,14.5"/>
  <path d="M5,30 L16,30 M5,33 L16,33 M5,36.5 L16,36.5 M5,40 L16,40 M8,28 L8,41 M13,28 L13,41"/>
  <path d="M5,44.5 L16,44.5 M5,48.5 L16,48.5 M10.5,43 L10.5,51 M7,46.5 L14,46.5"/>
 </g></svg>
</div>
<div style="position:absolute;left:527px;top:726px;width:628px;height:1px;background:#808080"></div>
<div style="position:absolute;left:527px;top:727px;width:628px;height:6px;background:#efefef"></div>
</body></html>
